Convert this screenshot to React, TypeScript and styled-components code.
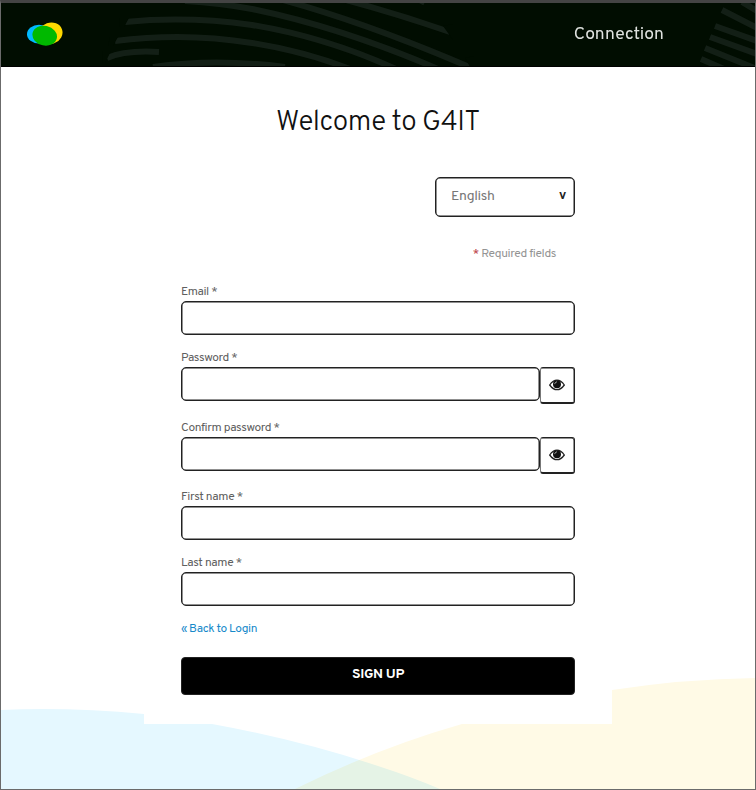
import React from "react";
import styled, { createGlobalStyle } from "styled-components";

const GlobalStyle = createGlobalStyle`
  * { box-sizing: border-box; }
  body { margin: 0; font-family: Overpass, Roboto, sans-serif; background: #fff; }
`;

const Page = styled.div`
  position: relative;
  width: 756px;
  height: 790px;
  overflow: hidden;
  background: #fff;
  border: solid #6b6b6b;
  border-width: 3px 1px 1px;
  border-top-color: #444;
`;

const Header = styled.header`
  position: relative;
  display: flex;
  align-items: center;
  justify-content: space-between;
  height: 64px;
  padding: 0 91px 0 25px;
  background: #010d01;
  border-bottom: 1px solid #000;
`;

const HeaderArt = styled.svg`
  position: absolute;
  left: 0;
  top: 0;
`;

const Logo = styled.svg`
  position: relative;
  margin-bottom: 1px;
`;

const NavLink = styled.a`
  position: relative;
  color: #dfe2df;
  font-size: 17.5px;
  letter-spacing: 0.05px;
  line-height: 20px;
  margin-top: 1px;
`;

const Waves = styled.svg`
  position: absolute;
  left: -1px;
  top: -3px;
  path { mix-blend-mode: multiply; }
`;

const Card = styled.main`
  position: relative;
  width: 468px;
  height: 657px;
  margin: 0 auto;
  padding: 0 37px;
  background: #fff;
`;

const Title = styled.h1`
  margin: 0;
  height: 110px;
  line-height: 112px;
  text-align: center;
  font-size: 28px;
  font-weight: 300;
  letter-spacing: -0.5px;
  color: #111;
  white-space: nowrap;
`;

const outline = `
  border: 1px solid #222;
  box-shadow: inset 0 0 0 0.5px #222;
  background: #fff;
`;

const LocaleSelect = styled.div`
  ${outline}
  display: flex;
  justify-content: space-between;
  width: 140px;
  height: 40px;
  margin-left: auto;
  padding: 0 8px 0 15px;
  border-radius: 5px;
  font-size: 14px;
  letter-spacing: -0.36px;
  line-height: 37px;
  color: #777;
`;

const Caret = styled.span`
  color: #222;
  font-size: 13px;
  font-weight: 700;
`;

const Required = styled.p`
  margin: 28px 19px 20px 0;
  text-align: right;
  font-size: 12px;
  letter-spacing: -0.38px;
  line-height: 18px;
  color: #949494;
  span { color: #b8323a; }
`;

const Field = styled.div<{ $pitch: number }>`
  height: ${(p) => p.$pitch}px;
`;

const Label = styled.label`
  display: block;
  height: 18px;
  line-height: 18px;
  font-size: 12px;
  letter-spacing: -0.4px;
  color: #606060;
`;

const InputRow = styled.div`
  display: flex;
`;

const Input = styled.input`
  ${outline}
  flex: 1;
  min-width: 0;
  height: 34px;
  border-radius: 5px;
  outline: none;
`;

const EyeButton = styled.button`
  ${outline}
  display: flex;
  justify-content: center;
  width: 35px;
  height: 37px;
  padding: 11px 2px 0 0;
  border-left-color: #777;
  border-bottom-width: 2px;
  box-shadow: inset -0.5px 0.5px 0 #222;
  border-radius: 3px;
`;

const BackLink = styled.a`
  display: block;
  height: 42px;
  padding-top: 5px;
  line-height: 18px;
  font-size: 12px;
  letter-spacing: -0.45px;
  color: #1689ca;
`;

const Submit = styled.button`
  display: block;
  width: 100%;
  height: 38px;
  padding: 0 0 4px;
  border: 1px solid #222;
  border-radius: 4px;
  background: #000;
  color: #fff;
  font: 700 14px Overpass, Roboto, sans-serif;
  letter-spacing: -0.4px;
`;

const EyeIcon = () => (
  <svg width="16" height="12" viewBox="0 0 16 12">
    <path d="M.7 6C3.2 2.4 5.3 1.2 8 1.2S12.8 2.4 15.3 6C12.8 9.5 10.7 10.7 8 10.7S3.2 9.5.7 6Z" fill="#fff" stroke="#222" strokeWidth="1.3" />
    <circle cx="8" cy="5.2" r="4" fill="#111" />
    <path d="M5.8 5.1C5.9 3.8 6.7 3 8 2.9" fill="none" stroke="#ccc" strokeWidth=".8" />
  </svg>
);

const fields = [
  { label: "Email *", pitch: 66 },
  { label: "Password *", pitch: 70, secret: true },
  { label: "Confirm password *", pitch: 69, secret: true },
  { label: "First name *", pitch: 66 },
  { label: "Last name *", pitch: 61 },
];

export default function App() {
  return (
    <>
      <GlobalStyle />
      <Page>
        <Waves width="756" height="790" viewBox="0 0 756 790">
          <path d="M0 710Q70 707 144 714Q180 718 212 724Q300 740 378 766Q412 777 440 789H0Z" fill="#e5f8ff" />
          <path d="M295 789Q378 748 462 724Q535 702 612 690Q684 679 756 678V790Z" fill="#fffae6" />
        </Waves>
        <Header>
          <HeaderArt width="754" height="63" viewBox="1 3 754 63">
            <g fill="none" stroke="#131f16" strokeWidth="6">
              <path d="M185 1Q220 3 252 9Q340 27 438 69" />
              <path d="M283 0Q370 24 474 69" />
              <path d="M346 0Q398 14 450 32" />
              <path d="M420 2L424 4" strokeWidth="3" />
              <path d="M125 22Q188 16 252 25Q325 37 396 69" />
              <path d="M115 41Q185 32 252 43Q303 51 350 69" />
              <path d="M107 58Q125 50 159 52" />
              <path d="M153 67Q215 58 285 67" />
              <path d="M742 2L757 11M722 10L757 28M715 26L757 41M710 37L757 54M705 48L757 69M701 59L724 69" />
            </g>
            <path d="M120 18H129L124 27H119ZM110 37H118L113 46H108ZM103 51H111L105 63H102ZM443 26L453 40V24ZM465 58L474 74V56Z" fill="#010d01" />
          </HeaderArt>
          <Logo width="37" height="25" viewBox="26 22 37 25">
            <ellipse cx="39" cy="34.2" rx="12" ry="9.4" fill="#00b9ff" />
            <ellipse cx="50.5" cy="33.3" rx="12.2" ry="10.7" fill="#ffd800" transform="rotate(-20 50.5 33.3)" />
            <ellipse cx="44.7" cy="35.7" rx="12.4" ry="9.8" fill="#00b900" transform="rotate(12 44.7 35.7)" />
          </Logo>
          <NavLink>Connection</NavLink>
        </Header>
        <Card>
          <Title>Welcome to G4IT</Title>
          <LocaleSelect>
            <span>English</span>
            <Caret>v</Caret>
          </LocaleSelect>
          <Required>
            <span>*</span> Required fields
          </Required>
          {fields.map((f) => (
            <Field key={f.label} $pitch={f.pitch}>
              <Label>{f.label}</Label>
              <InputRow>
                <Input type={f.secret ? "password" : "text"} aria-label={f.label} />
                {f.secret && (
                  <EyeButton aria-label="Show password">
                    <EyeIcon />
                  </EyeButton>
                )}
              </InputRow>
            </Field>
          ))}
          <BackLink>« Back to Login</BackLink>
          <Submit>SIGN UP</Submit>
        </Card>
      </Page>
    </>
  );
}
